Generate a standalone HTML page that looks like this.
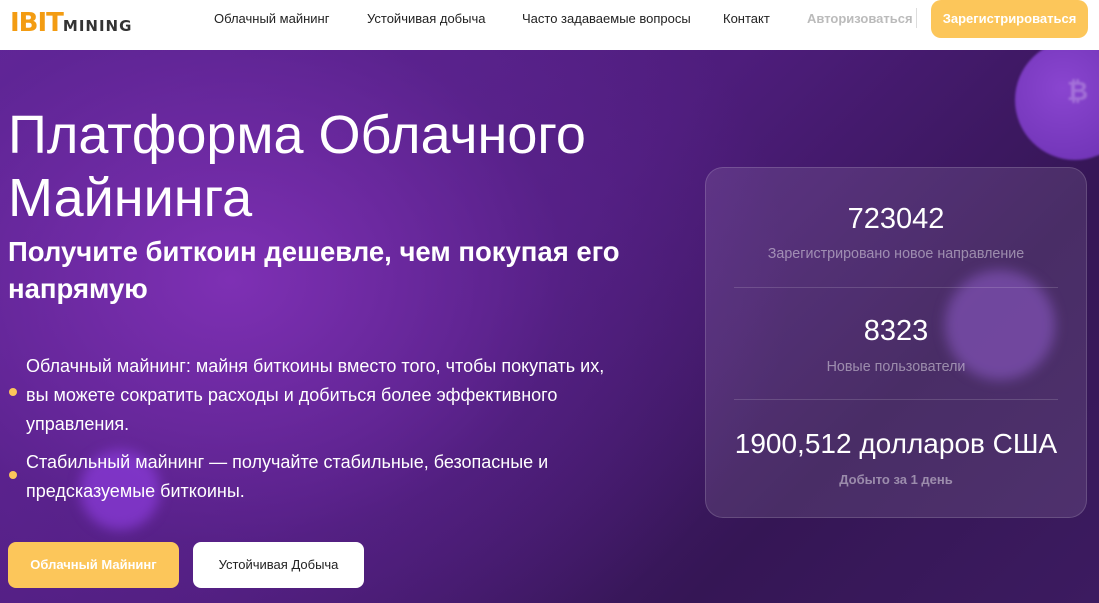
<!DOCTYPE html>
<html><head><meta charset="utf-8"><style>
*{margin:0;padding:0;box-sizing:border-box}
body{width:1099px;height:603px;overflow:hidden;font-family:"Liberation Sans",sans-serif;position:relative;background:#fff}
.hdr{position:absolute;left:0;top:0;width:1099px;height:50px;background:#fff}
.logo{position:absolute;left:10px;top:8px;font-weight:bold}
.logo .a{color:#f39c12;font-size:26px;letter-spacing:-1px;font-family:"DejaVu Sans",sans-serif}
.logo .b{color:#333;font-size:15px;letter-spacing:1px;font-family:"DejaVu Sans",sans-serif}
.nav a{position:absolute;top:11px;font-size:13px;color:#222;text-decoration:none}
.reg{position:absolute;left:931px;top:0;width:157px;height:38px;background:#fcc65a;border-radius:10px;color:#fff;font-size:13px;font-weight:bold;text-align:center;line-height:38px}
.hero{position:absolute;left:0;top:50px;width:1099px;height:553px;overflow:hidden;
background:radial-gradient(ellipse 560px 440px at 230px 230px,#7e30b4 0%,#6326985e 60%,transparent 100%),linear-gradient(135deg,#5e2596 0%,#4e1d7c 45%,#351655 75%,#3c1b60 100%)}
.h1{position:absolute;left:8px;top:54px;color:#fff;font-size:54px;line-height:63px}
.h2{position:absolute;left:8px;top:183px;color:#fff;font-size:27.5px;font-weight:bold;line-height:37px}
.bl{position:absolute;left:26px;color:#fff;font-size:18px;line-height:29px}
.dot{position:absolute;left:9px;width:8px;height:8px;border-radius:50%;background:#fcc65a}
.btn{position:absolute;top:492px;height:46px;border-radius:8px;font-size:13px;text-align:center;line-height:46px}
.panel{position:absolute;left:705px;top:117px;width:382px;height:351px;border-radius:18px;border:1px solid rgba(255,255,255,.15);background:rgba(255,255,255,.1);color:#fff;text-align:center}
.num{position:absolute;left:0;width:100%;font-size:29px}
.lab{position:absolute;left:0;width:100%;font-size:14.3px;color:rgba(255,255,255,.45)}
.sep{position:absolute;left:28px;right:28px;height:1px;background:rgba(255,255,255,.15)}
.coin{position:absolute;border-radius:50%}
</style></head><body>
<div class="hdr">
<div class="logo"><span class="a">IBIT</span><span class="b">MINING</span></div>
<div class="nav">
<a style="left:214px">Облачный майнинг</a>
<a style="left:367px">Устойчивая добыча</a>
<a style="left:522px">Часто задаваемые вопросы</a>
<a style="left:723px">Контакт</a>
<a style="left:807px;color:#bbb;font-weight:bold">Авторизоваться</a>
</div>
<div style="position:absolute;left:916px;top:8px;width:1px;height:20px;background:#ddd"></div>
<div class="reg">Зарегистрироваться</div>
</div>
<div class="hero">
<div class="coin" style="left:1015px;top:-10px;width:120px;height:120px;background:radial-gradient(circle at 40% 40%,#8a45d0,#6a30b0);filter:blur(1px)"><span style="position:absolute;left:52px;top:36px;color:rgba(255,255,255,.25);font-size:26px;font-weight:bold">₿</span></div>
<div class="coin" style="left:945px;top:220px;width:110px;height:110px;background:rgba(140,80,210,.5);filter:blur(6px)"></div>
<div class="coin" style="left:80px;top:400px;width:80px;height:80px;background:rgba(140,60,220,.7);filter:blur(6px)"></div>
<div class="h1">Платформа Облачного<br>Майнинга</div>
<div class="h2">Получите биткоин дешевле, чем покупая его<br>напрямую</div>
<div class="dot" style="top:338px"></div>
<div class="bl" style="top:302px">Облачный майнинг: майня биткоины вместо того, чтобы покупать их,<br>вы можете сократить расходы и добиться более эффективного<br>управления.</div>
<div class="dot" style="top:421px"></div>
<div class="bl" style="top:398px">Стабильный майнинг — получайте стабильные, безопасные и<br>предсказуемые биткоины.</div>
<div class="btn" style="left:8px;width:171px;background:#fcc65a;color:#fff;font-weight:bold">Облачный Майнинг</div>
<div class="btn" style="left:193px;width:171px;background:#fff;color:#222">Устойчивая Добыча</div>
<div class="panel">
<div class="num" style="top:35px">723042</div>
<div class="lab" style="top:78px">Зарегистрировано новое направление</div>
<div class="sep" style="top:119px"></div>
<div class="num" style="top:147px">8323</div>
<div class="lab" style="top:191px">Новые пользователи</div>
<div class="sep" style="top:231px"></div>
<div class="num" style="top:260px;font-size:28px">1900,512 долларов США</div>
<div class="lab" style="top:304px;font-weight:bold;font-size:13px">Добыто за 1 день</div>
</div>
</div>
</body></html>
